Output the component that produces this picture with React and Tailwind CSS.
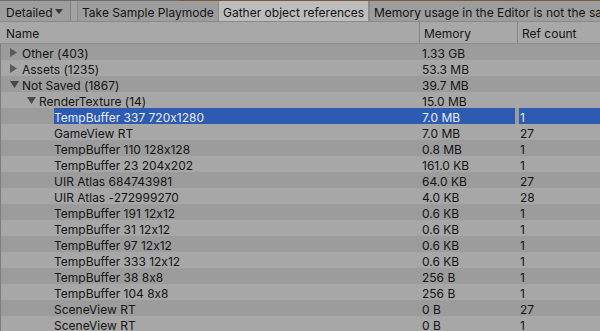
import React from "react";

const rows = [
  { name: "Other (403)", level: 0, arrow: "right", mem: "1.33 GB", ref: "" },
  { name: "Assets (1235)", level: 0, arrow: "right", mem: "53.3 MB", ref: "" },
  { name: "Not Saved (1867)", level: 0, arrow: "down", mem: "39.7 MB", ref: "" },
  { name: "RenderTexture (14)", level: 1, arrow: "down", mem: "15.0 MB", ref: "" },
  { name: "TempBuffer 337 720x1280", level: 2, mem: "7.0 MB", ref: "1", selected: true },
  { name: "GameView RT", level: 2, mem: "7.0 MB", ref: "27" },
  { name: "TempBuffer 110 128x128", level: 2, mem: "0.8 MB", ref: "1" },
  { name: "TempBuffer 23 204x202", level: 2, mem: "161.0 KB", ref: "1" },
  { name: "UIR Atlas 684743981", level: 2, mem: "64.0 KB", ref: "27" },
  { name: "UIR Atlas -272999270", level: 2, mem: "4.0 KB", ref: "28" },
  { name: "TempBuffer 191 12x12", level: 2, mem: "0.6 KB", ref: "1" },
  { name: "TempBuffer 31 12x12", level: 2, mem: "0.6 KB", ref: "1" },
  { name: "TempBuffer 97 12x12", level: 2, mem: "0.6 KB", ref: "1" },
  { name: "TempBuffer 333 12x12", level: 2, mem: "0.6 KB", ref: "1" },
  { name: "TempBuffer 38 8x8", level: 2, mem: "256 B", ref: "1" },
  { name: "TempBuffer 104 8x8", level: 2, mem: "256 B", ref: "1" },
  { name: "SceneView RT", level: 2, mem: "0 B", ref: "27" },
  { name: "SceneView RT", level: 2, mem: "0 B", ref: "1" },
];

function Arrow({ dir }) {
  if (dir === "right") {
    return (
      <svg width="7" height="9" viewBox="0 0 7 9" className="shrink-0">
        <path d="M0 0 L7 4.5 L0 9 Z" fill="#5a5a5a" />
      </svg>
    );
  }
  return (
    <svg width="9" height="7" viewBox="0 0 9 7" className="shrink-0">
      <path d="M0 0 L9 0 L4.5 7 Z" fill="#4a4a4a" />
    </svg>
  );
}

function Row({ r, i }) {
  const bg = i % 2 === 0 ? "bg-[#9c9c9c]" : "bg-[#a7a7a7]";
  const txt = r.selected ? "text-[#e8ecf5]" : "text-[#141414]";
  const levelPad =
    r.level === 0 ? "pl-[9px]" : r.level === 1 ? "pl-[26px]" : "pl-[53px]";
  return (
    <div className={`flex h-[16px] ${bg} ${txt}`}>
      <div className={`flex w-[420px] shrink-0 items-center ${levelPad}`}>
        {r.arrow ? (
          <div className="flex w-[12px] items-center pt-[1px]">
            <Arrow dir={r.arrow} />
          </div>
        ) : null}
        {r.selected ? (
          <div className="flex h-full flex-1 items-center bg-[#2d5bb1] pt-[3px]">
            {r.name}
          </div>
        ) : (
          <div className="whitespace-nowrap pt-[3px]">{r.name}</div>
        )}
      </div>
      <div className="flex w-[98px] shrink-0">
        <div
          className={`flex h-full w-[94px] items-center pl-[1px] pt-[3px] ${
            r.selected ? "bg-[#2d5bb1]" : ""
          }`}
        >
          {r.mem}
        </div>
      </div>
      <div
        className={`flex flex-1 items-center pl-[1px] pt-[3px] ${
          r.selected ? "bg-[#2d5bb1]" : ""
        }`}
      >
        {r.ref}
      </div>
    </div>
  );
}

export default function App() {
  return (
    <div
      className="flex h-[331px] w-[600px] flex-col overflow-hidden bg-[#a5a5a5] text-[12px] leading-none text-[#141414] [font-feature-settings:'calt'_0]"
      style={{ fontFamily: "Inter, 'Noto Sans', sans-serif" }}
    >
      <div className="flex h-[1px] w-full shrink-0">
        <div className="w-[180px] bg-[#6e6e6e]" />
        <div className="flex-1 bg-[#7a5a38]" />
      </div>
      <div className="flex h-[21px] shrink-0 items-stretch border-b border-[#8a8a8a] bg-[#a3a3a3]">
        <div className="flex w-[71px] shrink-0 items-center justify-between border-r border-[#808080] bg-[#9d9d9d] pl-[6px] pr-[7px] pt-[3px]">
          <span>Detailed</span>
          <svg width="8" height="5" viewBox="0 0 8 5" className="mb-[2px]">
            <path d="M0 0 L8 0 L4 5 Z" fill="#3a3a3a" />
          </svg>
        </div>
        <div className="w-[6px] shrink-0" />
        <div className="flex w-[142px] shrink-0 items-center border-x border-[#8c8c8c] bg-[#9d9d9d] pl-[4px] pt-[3px]">
          Take Sample Playmode
        </div>
        <div className="flex w-[150px] shrink-0 items-center border-r border-[#8c8c8c] bg-[#bdbdbd] pl-[4px] pt-[3px]">
          Gather object references
        </div>
        <div className="flex flex-1 items-center overflow-hidden whitespace-nowrap border-l border-[#8c8c8c] bg-[#9d9d9d] pl-[4px] pt-[3px]">
          Memory usage in the Editor is not the same as in a Player build
        </div>
      </div>
      <div className="flex h-[22px] shrink-0 border-b border-[#8e8e8e] bg-[#a8a8a8]">
        <div className="flex w-[420px] shrink-0 items-center border-r border-[#858585] pl-[6px] pt-[3px]">
          Name
        </div>
        <div className="flex w-[98px] shrink-0 items-center border-r border-[#858585] pl-[4px] pt-[3px]">
          Memory
        </div>
        <div className="flex flex-1 items-center pl-[4px] pt-[3px]">Ref count</div>
      </div>
      <div className="flex flex-col border-l border-[#7c7c7c]">
        {rows.map((r, i) => (
          <Row key={i} r={r} i={i} />
        ))}
      </div>
    </div>
  );
}
